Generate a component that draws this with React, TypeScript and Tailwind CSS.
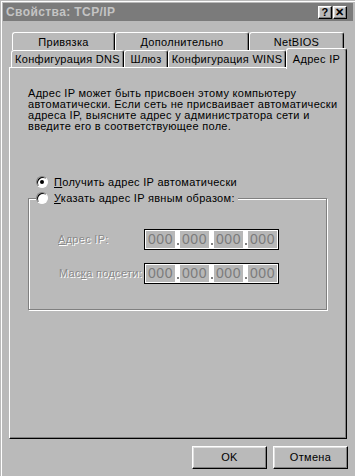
import React from 'react';

const raised =
  'border border-t-white border-l-white border-r-black border-b-black shadow-[inset_-1px_-1px_#808080,inset_1px_1px_#dfdfdf]';

function TitleButton({ children }: { children: React.ReactNode }) {
  return (
    <div className={`w-[14px] h-[13px] bg-[#bababa] ${raised} flex items-center justify-center text-[11px] font-bold leading-none text-black`}>
      {children}
    </div>
  );
}

function IpField() {
  return (
    <div className="w-[135px] h-[21px] border border-black bg-white p-[1px] flex items-stretch gap-[1px]">
      {[0, 1, 2, 3].map((i) => (
        <React.Fragment key={i}>
          {i > 0 && <div className="w-[3px] flex items-end justify-center pb-[3px]"><div className="w-[2px] h-[2px] bg-[#808080]" /></div>}
          <div className="flex-1 bg-[#b8b8b8] flex items-center justify-center text-[14px] text-[#7c7c7c] tracking-[0.5px]">000</div>
        </React.Fragment>
      ))}
    </div>
  );
}

export default function App() {
  return (
    <div className="w-[355px] h-[476px] bg-[#bababa] overflow-hidden font-['Liberation_Sans',Arial,sans-serif] text-[11px] text-black tracking-[0.3px]">
      <div className="h-full border-l border-t border-l-white border-t-white ml-[1px] mt-[1px] pl-[1px] pt-[1px] flex flex-col">
        {/* Title bar */}
        <div className="h-[18px] mr-[2px] bg-[#7b7b7b] flex items-center pl-[3px] pr-[6px]">
          <span className="font-bold text-[12px] text-[#c4c4c4] tracking-[0.4px]">Свойства: TCP/IP</span>
          <div className="ml-auto flex gap-[1px]">
            <TitleButton>?</TitleButton>
            <TitleButton>✕</TitleButton>
          </div>
        </div>

        {/* Tabs */}
        <div className="mt-[11px] pl-[9px] flex items-end h-[18px]">
          <div className="w-[103px] h-[18px] border-l border-t border-r border-l-white border-t-white border-r-black rounded-t-[3px] shadow-[inset_-1px_0_#808080] flex items-center justify-center pt-[1px]">Привязка</div>
          <div className="w-[134px] h-[18px] border-l border-t border-r border-l-white border-t-white border-r-black rounded-t-[3px] shadow-[inset_-1px_0_#808080] flex items-center justify-center pt-[1px]">Дополнительно</div>
          <div className="w-[95px] h-[18px] border-l border-t border-r border-l-white border-t-white border-r-black rounded-t-[3px] shadow-[inset_-1px_0_#808080] flex items-center justify-center pt-[1px]">NetBIOS</div>
        </div>
        <div className="pl-[8px] flex items-end h-[17px] relative z-10">
          <div className="w-[113px] h-[17px] border-l border-t border-r border-l-white border-t-white border-r-black rounded-t-[3px] shadow-[inset_-1px_0_#808080] flex items-center justify-center pt-[1px]">Конфигурация DNS</div>
          <div className="w-[44px] h-[17px] border-l border-t border-r border-l-white border-t-white border-r-black rounded-t-[3px] shadow-[inset_-1px_0_#808080] flex items-center justify-center pt-[1px]">Шлюз</div>
          <div className="w-[118px] h-[17px] border-l border-t border-r border-l-white border-t-white border-r-black rounded-t-[3px] shadow-[inset_-1px_0_#808080] flex items-center justify-center pt-[1px]">Конфигурация WINS</div>
          <div className="w-[61px] h-[21px] -mb-[2px] bg-[#bababa] border-l border-t border-r border-l-white border-t-white border-r-black rounded-t-[3px] shadow-[inset_-1px_0_#808080] flex items-start justify-center pt-[2px]">Адрес IP</div>
        </div>

        {/* Panel */}
        <div className="ml-[6px] w-[338px] h-[372px] border border-l-white border-t-white border-r-black border-b-black shadow-[inset_-1px_-1px_#808080] pt-[20px] pl-[18px]">
          <p className="leading-[11px]">
            Адрес IP может быть присвоен этому компьютеру<br />
            автоматически. Если сеть не присваивает автоматически<br />
            адреса IP, выясните адрес у администратора сети и<br />
            введите его в соответствующее поле.
          </p>

          <div className="mt-[44px] ml-[8px] flex items-center gap-[6px] h-[12px]">
            <div className="w-[12px] h-[12px] rounded-full bg-white border border-t-[#808080] border-l-[#808080] border-r-white border-b-white shadow-[inset_1px_1px_#000] flex items-center justify-center">
              <div className="w-[4px] h-[4px] rounded-full bg-black" />
            </div>
            <span><u>П</u>олучить адрес IP автоматически</span>
          </div>

          {/* Group box */}
          <div className="mt-[10px] w-[299px] h-[112px] relative border border-[#808080] shadow-[1px_1px_#fff,inset_1px_1px_#fff]">
            <div className="absolute -top-[7px] left-[7px] bg-[#bababa] pr-[3px] flex items-center gap-[6px] h-[12px]">
              <div className="w-[12px] h-[12px] rounded-full bg-white border border-t-[#808080] border-l-[#808080] border-r-white border-b-white shadow-[inset_1px_1px_#000]" />
              <span><u>У</u>казать адрес IP явным образом:</span>
            </div>

            <div className="mt-[30px] ml-[29px] flex items-center h-[21px]">
              <span className="w-[86px] text-[#8a8a8a] [text-shadow:1px_1px_0_#fff]"><u>А</u>дрес IP:</span>
              <IpField />
            </div>
            <div className="mt-[13px] ml-[30px] flex items-center h-[21px]">
              <span className="w-[85px] text-[#8a8a8a] [text-shadow:1px_1px_0_#fff]">Мас<u>к</u>а подсети:</span>
              <IpField />
            </div>
          </div>
        </div>

        {/* Buttons */}
        <div className="mt-[7px] flex justify-end gap-[6px] pr-[7px]">
          <div className={`w-[75px] h-[23px] ${raised} flex items-center justify-center`}>OK</div>
          <div className={`w-[75px] h-[23px] ${raised} flex items-center justify-center`}>Отмена</div>
        </div>
      </div>
    </div>
  );
}
